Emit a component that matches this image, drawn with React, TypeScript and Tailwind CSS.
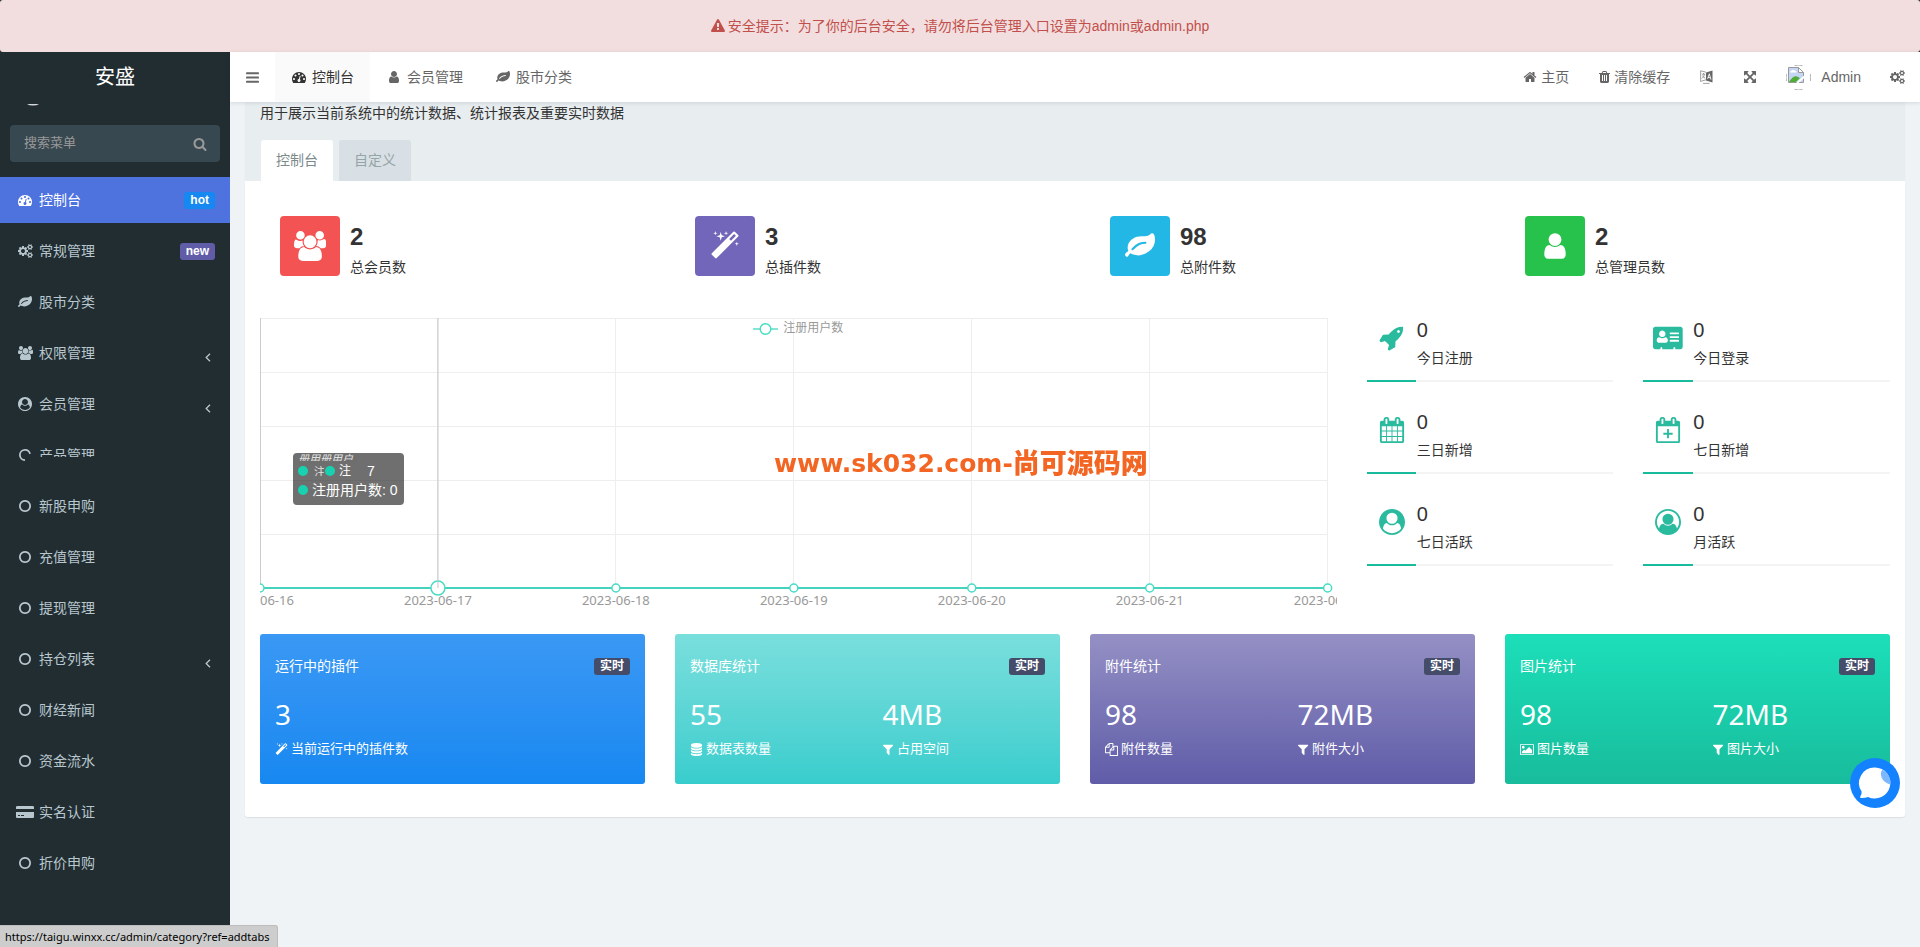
import React, { useState } from "react";
import clsx from "clsx";

// Font Awesome 4 outlines, most of them on a 1792 grid
const ICONS = {
  tachometer: {
    w: 1792,
    d: "M384 1152q0-53-37.5-90.5t-90.5-37.5-90.5 37.5-37.5 90.5 37.5 90.5 90.5 37.5 90.5-37.5 37.5-90.5zm192-448q0-53-37.5-90.5t-90.5-37.5-90.5 37.5-37.5 90.5 37.5 90.5 90.5 37.5 90.5-37.5 37.5-90.5zm428 481l101-382q6-26-7.5-48.5t-38.5-29.5-48 6.5-30 39.5l-101 382q-60 5-107 43.5t-63 98.5q-20 77 20 146t117 89 146-20 89-117q16-60-6-117t-72-91zm660-33q0-53-37.5-90.5t-90.5-37.5-90.5 37.5-37.5 90.5 37.5 90.5 90.5 37.5 90.5-37.5 37.5-90.5zm-640-640q0-53-37.5-90.5t-90.5-37.5-90.5 37.5-37.5 90.5 37.5 90.5 90.5 37.5 90.5-37.5 37.5-90.5zm448 192q0-53-37.5-90.5t-90.5-37.5-90.5 37.5-37.5 90.5 37.5 90.5 90.5 37.5 90.5-37.5 37.5-90.5zm320 448q0 261-141 483-19 29-54 29h-1402q-35 0-54-29-141-221-141-483 0-182 71-348t191-286 286-191 348-71 348 71 286 191 191 286 71 348z",
  },
  user: {
    w: 1792,
    d: "M1536 1399q0 109-62.5 187t-150.5 78h-854q-88 0-150.5-78t-62.5-187q0-85 8.5-160.5t31.5-152 58.5-131 94-89 134.5-34.5q131 128 313 128t313-128q76 0 134.5 34.5t94 89 58.5 131 31.5 152 8.5 160.5zm-256-887q0 159-112.5 271.5t-271.5 112.5-271.5-112.5-112.5-271.5 112.5-271.5 271.5-112.5 271.5 112.5 112.5 271.5z",
  },
  leaf: {
    w: 1792,
    d: "M1280 704q0-26-19-45t-45-19q-172 0-318 49.5t-259.5 134-235.5 219.5q-19 21-19 45 0 26 19 45t45 19q24 0 45-19 27-24 74-71t67-66q137-124 268.5-176t313.5-52q26 0 45-19t19-45zm512-198q0 95-20 193-46 224-184.5 383t-357.5 268q-214 108-438 108-148 0-286-47-15-5-88-42t-96-37q-16 0-39.5 32t-45 70-52.5 70-60 32q-43 0-63.5-17.5t-45.5-59.5q-2-4-6-11t-5.5-10-3-9.5-1.5-13.5q0-35 31-73.5t68-65.5 68-56 31-48q0-4-14-38t-16-44q-9-51-9-104 0-115 43.5-220t119-184.5 170.5-139 204-95.5q55-18 145-25.5t179.5-9 178.5-6 163.5-24 113.5-56.5l29.5-29.5 29.5-28 27-20 36.5-16 43.5-4.5q39 0 70.5 46t47.5 112 24 124 8 96z",
  },
  home: {
    w: 1792,
    d: "M1472 992v480q0 26-19 45t-45 19h-384v-384h-256v384h-384q-26 0-45-19t-19-45v-480q0-1 .5-3t.5-3l575-474 575 474q1 2 1 6zm223-69l-62 74q-8 9-21 11h-3q-13 0-21-7l-692-577-692 577q-12 8-24 7-13-2-21-11l-62-74q-8-10-7-23.5t11-21.5l719-599q32-26 76-26t76 26l244 204v-195q0-14 9-23t23-9h192q14 0 23 9t9 23v408l219 182q10 8 11 21.5t-7 23.5z",
  },
  users: {
    w: 1920,
    d: "M593 896q-162 5-265 128h-134q-82 0-138-40.5t-56-118.5q0-353 124-353 6 0 43.5 21t97.5 42.5 119 21.5q67 0 133-23-5 37-5 66 0 159 93 293zm1071 637q0 120-73 189.5t-194 69.5h-874q-121 0-194-69.5t-73-189.5q0-53 3.5-103.5t14-109 26.5-108.5 43-97.5 62-81 85.5-53.5 111.5-20q10 0 43 21.5t73 48 107 48 135 21.5 135-21.5 107-48 73-48 43-21.5q61 0 111.5 20t85.5 53.5 62 81 43 97.5 26.5 108.5 14 109 3.5 103.5zm-1024-1277q0 106-75 181t-181 75-181-75-75-181 75-181 181-75 181 75 75 181zm704 384q0 159-112.5 271.5t-271.5 112.5-271.5-112.5-112.5-271.5 112.5-271.5 271.5-112.5 271.5 112.5 112.5 271.5zm576 225q0 78-56 118.5t-138 40.5h-134q-103-123-265-128 93-134 93-293 0-29-5-66 66 23 133 23 59 0 119-21.5t97.5-42.5 43.5-21q124 0 124 353zm-128-609q0 106-75 181t-181 75-181-75-75-181 75-181 181-75 181 75 75 181z",
  },
  magic: {
    w: 1792,
    d: "M1254 581l293-293-107-107-293 293zm447-293q0 27-18 45l-1286 1286q-18 18-45 18t-45-18l-198-198q-18-18-18-45t18-45l1286-1286q18-18 45-18t45 18l198 198q18 18 18 45zm-1351-190l98 30-98 30-30 98-30-98-98-30 98-30 30-98zm350 162l196 60-196 60-60 196-60-196-196-60 196-60 60-196zm930 478l98 30-98 30-30 98-30-98-98-30 98-30 30-98zm-640-640l98 30-98 30-30 98-30-98-98-30 98-30 30-98z",
  },
  trash: {
    x: 192,
    w: 1408,
    d: "M704 1376v-704q0-14-9-23t-23-9h-64q-14 0-23 9t-9 23v704q0 14 9 23t23 9h64q14 0 23-9t9-23zm256 0v-704q0-14-9-23t-23-9h-64q-14 0-23 9t-9 23v704q0 14 9 23t23 9h64q14 0 23-9t9-23zm256 0v-704q0-14-9-23t-23-9h-64q-14 0-23 9t-9 23v704q0 14 9 23t23 9h64q14 0 23-9t9-23zm-544-992h448l-48-117q-7-9-17-11h-317q-10 2-17 11zm928 32v64q0 14-9 23t-23 9h-96v948q0 83-47 143.5t-113 60.5h-832q-66 0-113-58.5t-47-141.5v-952h-96q-14 0-23-9t-9-23v-64q0-14 9-23t23-9h309l70-167q15-37 54-63t79-26h320q40 0 79 26t54 63l70 167h309q14 0 23 9t9 23z",
  },
  expand: {
    w: 1792,
    d: "M1411 541l-355 355 355 355 144-144q29-31 70-14 39 17 39 59v448q0 26-19 45t-45 19h-448q-42 0-59-40-17-39 14-69l144-144-355-355-355 355 144 144q31 30 14 69-17 40-59 40h-448q-26 0-45-19t-19-45v-448q0-42 40-59 39-17 69 14l144 144 355-355-355-355-144 144q-19 19-45 19-12 0-24-5-40-17-40-59v-448q0-26 19-45t45-19h448q42 0 59 40 17 39-14 69l-144 144 355 355 355-355-144-144q-31-30-14-69 17-40 59-40h448q26 0 45 19t19 45v448q0 42-39 59-13 5-25 5-26 0-45-19z",
  },
  bars: {
    w: 1792,
    d: "M192 1280h1408q64 0 64 64v128q0 64-64 64h-1408q-64 0-64-64v-128q0-64 64-64zM192 768h1408q64 0 64 64v128q0 64-64 64h-1408q-64 0-64-64v-128q0-64 64-64zM192 256h1408q64 0 64 64v128q0 64-64 64h-1408q-64 0-64-64v-128q0-64 64-64z",
  },
  search: {
    w: 1792,
    d: "M1216 832q0-185-131.5-316.5t-316.5-131.5-316.5 131.5-131.5 316.5 131.5 316.5 316.5 131.5 316.5-131.5 131.5-316.5zm512 832q0 52-38 90t-90 38q-54 0-90-38l-343-342q-179 124-399 124-143 0-273.5-55.5t-225-150-150-225-55.5-273.5 55.5-273.5 150-225 225-150 273.5-55.5 273.5 55.5 225 150 150 225 55.5 273.5q0 220-124 399l343 343q37 37 37 90z",
  },
  circle: {
    w: 1792,
    d: "M896 352q-148 0-273 73t-198 198-73 273 73 273 198 198 273 73 273-73 198-198 73-273-73-273-198-198-273-73zm768 544q0 209-103 385.5t-279.5 279.5-385.5 103-385.5-103-279.5-279.5-103-385.5 103-385.5 279.5-279.5 385.5-103 385.5 103 279.5 279.5 103 385.5z",
  },
  brokenCircle: {
    w: 1792,
    d: "M896 128a768 768 0 0 1 750 600l-222 30a544 544 0 1 0-528 682v224a768 768 0 1 1 0-1536z",
  },
  userCircle: {
    w: 1792,
    d: "M1523 1339q-22-155-87.5-257.5t-184.5-118.5q-67 74-159.5 115.5t-195.5 41.5-195.5-41.5-159.5-115.5q-119 16-184.5 118.5t-87.5 257.5q106 150 271 237.5t356 87.5 356-87.5 271-237.5zm-243-699q0-159-112.5-271.5t-271.5-112.5-271.5 112.5-112.5 271.5 112.5 271.5 271.5 112.5 271.5-112.5 112.5-271.5zm512 256q0 182-71 347.5t-190.5 286-285.5 191.5-349 71q-182 0-348-71t-286-191-191-286-71-348 71-348 191-286 286-191 348-71 348 71 286 191 191 286 71 348z",
  },
  userCircleO: {
    w: 1792,
    d: "M896 0q182 0 348 71t286 191 191 286 71 348q0 181-70.5 347t-190.5 286-286 191.5-349 71.5-349-71-285.5-191.5-190.5-286-71-347.5 71-348 191-286 286-191 348-71zm619 1351q149-205 149-455 0-156-61-298t-164-245-245-164-298-61-298 61-245 164-164 245-61 298q0 250 149 455 66-327 306-327 131 128 313 128t313-128q240 0 306 327zm-235-647q0-159-112.5-271.5t-271.5-112.5-271.5 112.5-112.5 271.5 112.5 271.5 271.5 112.5 271.5-112.5 112.5-271.5z",
  },
  cogs: {
    w: 1920,
    d: "M896 896q0-106-75-181t-181-75-181 75-75 181 75 181 181 75 181-75 75-181zm768 512q0-52-38-90t-90-38-90 38-38 90q0 53 37.5 90.5t90.5 37.5 90.5-37.5 37.5-90.5zm0-1024q0-52-38-90t-90-38-90 38-38 90q0 53 37.5 90.5t90.5 37.5 90.5-37.5 37.5-90.5zm-384 421v185q0 10-7 19.5t-16 10.5l-155 24q-11 35-32 76 34 48 90 115 7 11 7 20 0 12-7 19-23 30-82.5 89.5t-78.5 59.5q-11 0-21-7l-115-90q-37 19-77 31-11 108-23 155-7 24-30 24h-186q-11 0-20-7.5t-10-17.5l-23-153q-34-10-75-31l-118 89q-7 7-20 7-11 0-21-8-144-133-144-160 0-9 7-19 10-14 41-53t47-61q-23-44-35-82l-152-24q-10-1-17-9.5t-7-19.5v-185q0-10 7-19.5t16-10.5l155-24q11-35 32-76-34-48-90-115-7-11-7-20 0-12 7-20 22-30 82-89t79-59q11 0 21 7l115 90q34-18 77-32 11-108 23-154 7-24 30-24h186q11 0 20 7.5t10 17.5l23 153q34 10 75 31l118-89q8-7 20-7 11 0 21 8 144 133 144 160 0 8-7 19-12 16-42 54t-45 60q23 48 34 82l152 23q10 2 17 10.5t7 19.5zm640 533v140q0 16-149 31-12 27-30 52 51 113 51 138 0 4-4 7-122 71-124 71-8 0-46-47t-52-68q-20 2-30 2t-30-2q-14 21-52 68t-46 47q-2 0-124-71-4-3-4-7 0-25 51-138-18-25-30-52-149-15-149-31v-140q0-16 149-31 13-29 30-52-51-113-51-138 0-4 4-7 4-2 35-20t59-34 30-16q8 0 46 46.5t52 67.5q20-2 30-2t30 2q51-71 92-112l6-2q4 0 124 70 4 3 4 7 0 25-51 138 17 23 30 52 149 15 149 31zm0-1024v140q0 16-149 31-12 27-30 52 51 113 51 138 0 4-4 7-122 71-124 71-8 0-46-47t-52-68q-20 2-30 2t-30-2q-14 21-52 68t-46 47q-2 0-124-71-4-3-4-7 0-25 51-138-18-25-30-52-149-15-149-31v-140q0-16 149-31 13-29 30-52-51-113-51-138 0-4 4-7 4-2 35-20t59-34 30-16q8 0 46 46.5t52 67.5q20-2 30-2t30 2q51-71 92-112l6-2q4 0 124 70 4 3 4 7 0 25-51 138 17 23 30 52 149 15 149 31z",
  },
  rocket: {
    w: 1792,
    d: "M1440 448q0-40-28-68t-68-28-68 28-28 68 28 68 68 28 68-28 28-68zm224-288q0 249-75.5 430.5t-253.5 360.5q-81 80-195 176l-20 379q-2 16-16 26l-384 224q-7 4-16 4-12 0-23-9l-64-64q-13-14-8-32l85-276-281-281-276 85q-3 1-9 1-14 0-23-9l-64-64q-17-19-5-39l224-384q10-14 26-16l379-20q96-114 176-195 188-187 358-258t431-71q14 0 24 9.5t10 22.5z",
  },
  warning: {
    w: 1792,
    d: "M1024 1375v-190q0-14-9.5-23.5t-22.5-9.5h-192q-13 0-22.5 9.5t-9.5 23.5v190q0 14 9.5 23.5t22.5 9.5h192q13 0 22.5-9.5t9.5-23.5zm-2-374l18-459q0-12-10-19-13-11-24-11h-220q-11 0-24 11-10 7-10 21l17 457q0 10 10 16.5t24 6.5h185q14 0 23.5-6.5t10.5-16.5zm-14-934l768 1408q35 63-2 126-17 29-46.5 46t-63.5 17h-1536q-34 0-63.5-17t-46.5-46q-37-63-2-126l768-1408q17-31 47-49t65-18 65 18 47 49z",
  },
  calendar: {
    w: 1792,
    d: "M192 1664h288v-288h-288v288zm352 0h320v-288h-320v288zm-352-352h288v-320h-288v320zm352 0h320v-320h-320v320zm-352-384h288v-288h-288v288zm736 736h320v-288h-320v288zm-384-736h320v-288h-320v288zm768 736h288v-288h-288v288zm-384-352h320v-320h-320v320zm-352-864v-288q0-13-9.5-22.5t-22.5-9.5h-64q-13 0-22.5 9.5t-9.5 22.5v288q0 13 9.5 22.5t22.5 9.5h64q13 0 22.5-9.5t9.5-22.5zm736 864h288v-320h-288v320zm-384-384h320v-288h-320v288zm384 0h288v-288h-288v288zm32-480v-288q0-13-9.5-22.5t-22.5-9.5h-64q-13 0-22.5 9.5t-9.5 22.5v288q0 13 9.5 22.5t22.5 9.5h64q13 0 22.5-9.5t9.5-22.5zm384-64v1280q0 52-38 90t-90 38h-1408q-52 0-90-38t-38-90v-1280q0-52 38-90t90-38h128v-96q0-66 47-113t113-47h64q66 0 113 47t47 113v96h384v-96q0-66 47-113t113-47h64q66 0 113 47t47 113v96h128q52 0 90 38t38 90z",
  },
  calendarPlus: {
    w: 1792,
    d: "M1728 384v1280q0 52-38 90t-90 38h-1408q-52 0-90-38t-38-90v-1280q0-52 38-90t90-38h128v-96q0-66 47-113t113-47h64q66 0 113 47t47 113v96h384v-96q0-66 47-113t113-47h64q66 0 113 47t47 113v96h128q52 0 90 38t38 90zM192 640v1024h1408v-1024zM832 832h128v256h256v128h-256v256h-128v-256h-256v-128h256zM480 128h64q32 0 32 32v288q0 32-32 32h-64q-32 0-32-32v-288q0-32 32-32zM1248 128h64q32 0 32 32v288q0 32-32 32h-64q-32 0-32-32v-288q0-32 32-32z",
    evenOdd: true,
  },
  card: {
    w: 2048,
    d: "M160 128h1728q66 0 113 47t47 113v1216q0 66-47 113t-113 47h-352v-96q0-32-32-32h-64q-32 0-32 32v96h-768v-96q0-32-32-32h-64q-32 0-32 32v96h-352q-66 0-113-47t-47-113v-1216q0-66 47-113t113-47zM430 840q-174 0-174 250 0 126 118 126h532q118 0 118-126 0-250-174-250-100 72-210 72t-210-72zM640 384a224 224 0 1 0 1 0zM1184 512h576q32 0 32 32v64q0 32-32 32h-576q-32 0-32-32v-64q0-32 32-32zM1184 768h576q32 0 32 32v64q0 32-32 32h-576q-32 0-32-32v-64q0-32 32-32zM1184 1024h576q32 0 32 32v64q0 32-32 32h-576q-32 0-32-32v-64q0-32 32-32z",
    evenOdd: true,
  },
  creditCard: {
    w: 2304,
    d: "M160 128h1984q66 0 113 47t47 113v224h-2304v-224q0-66 47-113t113-47zM0 896h2304v608q0 66-47 113t-113 47h-1984q-66 0-113-47t-47-113zM256 1280v128h256v-128zM640 1280v128h384v-128z",
    evenOdd: true,
  },
  database: {
    w: 1792,
    d: "M896 768q237 0 443-43t325-127v170q0 69-103 128t-280 93.5-385 34.5-385-34.5-280-93.5-103-128v-170q119 84 325 127t443 43zm0 768q237 0 443-43t325-127v170q0 69-103 128t-280 93.5-385 34.5-385-34.5-280-93.5-103-128v-170q119 84 325 127t443 43zm0-384q237 0 443-43t325-127v170q0 69-103 128t-280 93.5-385 34.5-385-34.5-280-93.5-103-128v-170q119 84 325 127t443 43zm0-1152q208 0 385 34.5t280 93.5 103 128v128q0 69-103 128t-280 93.5-385 34.5-385-34.5-280-93.5-103-128v-128q0-69 103-128t280-93.5 385-34.5z",
  },
  filter: {
    x: 192,
    w: 1600,
    d: "M1595 295q17 41-14 70l-493 493v742q0 42-39 59-13 5-25 5-27 0-45-19l-256-256q-19-19-19-45v-486l-493-493q-31-29-14-70 17-39 59-39h1280q42 0 59 39z",
  },
  image: {
    w: 1920,
    d: "M640 576q0 80-56 136t-136 56-136-56-56-136 56-136 136-56 136 56 56 136zm1024 384v448h-1408v-192l320-320 160 160 512-512zm96-704h-1600q-13 0-22.5 9.5t-9.5 22.5v1216q0 13 9.5 22.5t22.5 9.5h1600q13 0 22.5-9.5t9.5-22.5v-1216q0-13-9.5-22.5t-22.5-9.5zm160 32v1216q0 66-47 113t-113 47h-1600q-66 0-113-47t-47-113v-1216q0-66 47-113t113-47h1600q66 0 113 47t47 113z",
  },
  files: {
    w: 1792,
    d: "M1696 384q40 0 68 28t28 68v1216q0 40-28 68t-68 28h-960q-40 0-68-28t-28-68v-288h-544q-40 0-68-28t-28-68v-672q0-40 20-88t48-76l408-408q28-28 76-48t88-20h416q40 0 68 28t28 68v328q68-40 128-40h416zm-544 213l-299 299h299v-299zm-640-384l-299 299h299v-299zm196 647l316-316v-416h-384v416q0 40-28 68t-68 28h-416v640h512v-256q0-40 20-88t48-76zm956 804v-1152h-384v416q0 40-28 68t-68 28h-416v640h896z",
  },
};

type IconName = keyof typeof ICONS;

// height comes from the class, width follows the glyph
const Icon: React.FC<{ name: IconName; className?: string }> = ({ name, className = "h-3.5" }) => {
  const icon: { x?: number; w: number; d: string; evenOdd?: boolean } = ICONS[name];
  return (
    <svg
      viewBox={`${icon.x ?? 0} 0 ${icon.w} 1792`}
      className={clsx("w-auto shrink-0 fill-current", className)}
      fillRule={icon.evenOdd ? "evenodd" : "nonzero"}
      aria-hidden="true"
    >
      <path d={icon.d} />
    </svg>
  );
};

interface MenuItem {
  label: string;
  icon: IconName;
  badge?: string;
  badgeClass?: string;
  arrow?: boolean;
  fading?: boolean;
}

const MENU: MenuItem[] = [
  { label: "控制台", icon: "tachometer", badge: "hot", badgeClass: "bg-[#1688f1]" },
  { label: "常规管理", icon: "cogs", badge: "new", badgeClass: "bg-[#605ca8]" },
  { label: "股市分类", icon: "leaf" },
  { label: "权限管理", icon: "users", arrow: true },
  { label: "会员管理", icon: "userCircle", arrow: true },
  { label: "产品管理", icon: "brokenCircle", fading: true },
  { label: "新股申购", icon: "circle" },
  { label: "充值管理", icon: "circle" },
  { label: "提现管理", icon: "circle" },
  { label: "持仓列表", icon: "circle", arrow: true },
  { label: "财经新闻", icon: "circle" },
  { label: "资金流水", icon: "circle" },
  { label: "实名认证", icon: "creditCard" },
  { label: "折价申购", icon: "circle" },
];

const NAV_TABS: { label: string; icon: IconName }[] = [
  { label: "控制台", icon: "tachometer" },
  { label: "会员管理", icon: "user" },
  { label: "股市分类", icon: "leaf" },
];

const TOTALS: { value: number; label: string; icon: IconName; color: string }[] = [
  { value: 2, label: "总会员数", icon: "users", color: "bg-[#f35352]" },
  { value: 3, label: "总插件数", icon: "magic", color: "bg-[#7266ba]" },
  { value: 98, label: "总附件数", icon: "leaf", color: "bg-[#23b7e5]" },
  { value: 2, label: "总管理员数", icon: "user", color: "bg-[#27c24c]" },
];

const ACTIVITY: { label: string; icon: IconName }[] = [
  { label: "今日注册", icon: "rocket" },
  { label: "今日登录", icon: "card" },
  { label: "三日新增", icon: "calendar" },
  { label: "七日新增", icon: "calendarPlus" },
  { label: "七日活跃", icon: "userCircle" },
  { label: "月活跃", icon: "userCircleO" },
];

const CARDS: {
  title: string;
  color: string;
  items: { value: string; label: string; icon: IconName }[];
}[] = [
  {
    title: "运行中的插件",
    color: "from-[#3a98f4] to-[#1688f1]",
    items: [{ value: "3", label: "当前运行中的插件数", icon: "magic" }],
  },
  {
    title: "数据库统计",
    color: "from-[#79dfdd] to-[#37cdcd]",
    items: [
      { value: "55", label: "数据表数量", icon: "database" },
      { value: "4MB", label: "占用空间", icon: "filter" },
    ],
  },
  {
    title: "附件统计",
    color: "from-[#9590c4] to-[#605ca8]",
    items: [
      { value: "98", label: "附件数量", icon: "files" },
      { value: "72MB", label: "附件大小", icon: "filter" },
    ],
  },
  {
    title: "图片统计",
    color: "from-[#1cdfb9] to-[#18bc9c]",
    items: [
      { value: "98", label: "图片数量", icon: "image" },
      { value: "72MB", label: "图片大小", icon: "filter" },
    ],
  },
];

const DATES = ["2023-06-16", "2023-06-17", "2023-06-18", "2023-06-19", "2023-06-20", "2023-06-21", "2023-06-22"];
const HOVERED = 1;

const Sidebar: React.FC = () => (
  <aside className="w-[230px] shrink-0 bg-[#222d32] text-[#b8c7ce]">
    <a href="#" className="flex h-[50px] items-center justify-center text-xl text-white">
      安盛
    </a>
    <div className="h-[23px] pt-0.5 pl-[27px]">
      <svg viewBox="0 0 12 2" className="h-0.5 w-3" aria-hidden="true">
        <path d="M0 0h12q-2 1.600-6 1.600T0 0z" fill="#d5d8d9" />
      </svg>
    </div>
    <form className="mx-2.5 flex h-[37px] items-center rounded bg-[#374850] text-[#999]">
      <input
        type="text"
        aria-label="搜索菜单"
        placeholder="搜索菜单"
        className="min-w-0 flex-1 bg-transparent pl-3.5 text-[13px] placeholder:text-[#999] focus:outline-none"
      />
      <button type="button" aria-label="搜索" className="px-[13px]">
        <Icon name="search" />
      </button>
    </form>
    <ul className="mt-[15px] space-y-[5px] pb-10">
      {MENU.map((item, i) => (
        <li key={item.label}>
          <a
            href="#"
            className={clsx("flex h-[46px] items-center gap-1 px-[15px]", i === 0 && "bg-[#4e73df] text-white")}
          >
            <span className="flex w-5 justify-center">
              <Icon name={item.icon} />
            </span>
            {item.fading ? (
              <span className="h-5 leading-5">
                <span className="block h-3 overflow-hidden">{item.label}</span>
              </span>
            ) : (
              <span className="leading-5">{item.label}</span>
            )}
            {item.badge && (
              <span
                className={clsx(
                  "ml-auto rounded-[3px] px-1.5 text-xs leading-[17px] font-bold text-white",
                  item.badgeClass
                )}
              >
                {item.badge}
              </span>
            )}
            {item.arrow && (
              <svg viewBox="0 0 6 9" className="mt-2 mr-1 ml-auto h-[9px] w-1.5" aria-hidden="true">
                <path d="M5 .7 1.2 4.5 5 8.3" fill="none" stroke="currentColor" strokeWidth="1.3" />
              </svg>
            )}
          </a>
        </li>
      ))}
    </ul>
  </aside>
);

const Navbar: React.FC = () => (
  <nav className="relative z-10 flex h-[50px] bg-white text-[#666] shadow-[0_1px_4px_rgba(0,21,41,0.12)]">
    <button type="button" aria-label="切换菜单" className="flex w-[45px] items-center justify-center">
      <Icon name="bars" className="h-[15px]" />
    </button>
    {NAV_TABS.map((tab, i) => (
      <a
        key={tab.label}
        href="#"
        className={clsx("flex items-center gap-[5px] px-4", i === 0 && "bg-[#fafafa] text-[#333]")}
      >
        <span className="flex w-4 justify-center">
          <Icon name={tab.icon} />
        </span>
        {tab.label}
      </a>
    ))}
    <div className="ml-auto flex">
      <a href="#" className="flex items-center gap-1 px-[15px]">
        <Icon name="home" />
        主页
      </a>
      <a href="#" className="flex items-center gap-1 px-[15px]">
        <Icon name="trash" />
        清除缓存
      </a>
      <a href="#" aria-label="语言" className="flex items-center px-[15px]">
        <svg viewBox="0 0 13 14" className="h-3.5 w-[13px]" aria-hidden="true">
          <path d="M6 2.2.6.8v10.600L6 9.800M3 13.400h6.500" fill="none" stroke="#8a8a8a" strokeWidth=".8" />
          <path
            d="M1.800 4.200h3.400M3.500 3v1.200M1.800 8.600q2.200-1.600 2.700-4.400M2.400 5.600q1 2 2.900 2.600"
            fill="none"
            stroke="#888"
            strokeWidth=".8"
          />
          <path d="M6 2.600 12.500.6v12L6 10.400z" fill="currentColor" />
          <path d="m7.600 8.800 1.700-5 1.700 5.800M8.100 7.400l2.300.4" fill="none" stroke="#fff" strokeWidth=".9" />
        </svg>
      </a>
      <a href="#" aria-label="全屏" className="flex items-center px-[15px]">
        <Icon name="expand" />
      </a>
      <a href="#" className="flex items-center gap-2.5 px-3.5">
        <svg viewBox="0 0 25 25" className="h-[25px] w-[25px]" aria-hidden="true">
          <path
            d="M8.500.6q4-1 8 0M8.500 24.400q4 1 8 0M.5 9q-.8 3.500 0 7M24.500 9q-.2 3.500 0 7"
            fill="none"
            stroke="#b5b5b5"
          />
          <path d="M2.500 2.500h10l5 5v10h-15z" fill="#c5d6f5" stroke="#9a9a9a" />
          <path d="M12.500 2.500v5h5z" fill="#fff" stroke="#9a9a9a" />
          <path d="M4 7.500q0-2 2-2 1-1.500 2.500 0 2 0 2 2z" fill="#fff" />
          <path d="M3 17q4-6.500 8-5.500l3 1.500-4 4z" fill="#4fac34" />
          <path d="m11 18 7.500-6.500" stroke="#fff" strokeWidth="2" />
        </svg>
        Admin
      </a>
      <a href="#" aria-label="设置" className="flex items-center px-[15px]">
        <Icon name="cogs" />
      </a>
    </div>
  </nav>
);

const Chart: React.FC = () => {
  const x = (i: number) => `${(i * 100) / (DATES.length - 1)}%`;

  return (
    <div className="relative h-[300px] overflow-hidden pr-[9px]">
      <svg className="block h-full w-full overflow-visible" role="img" aria-label="注册用户数">
        <g stroke="#eee" shapeRendering="crispEdges">
          {[0, 54, 108, 162, 216].map((y) => (
            <line key={y} x1="0" x2="100%" y1={y + 0.5} y2={y + 0.5} />
          ))}
          {DATES.map((date, i) => (
            <line key={date} x1={x(i)} x2={x(i)} y1="0" y2="270" stroke={i === 0 ? "#ccc" : "#eee"} />
          ))}
        </g>
        <line x1="0" x2="100%" y1="270" y2="270" stroke="#46d3bd" strokeWidth="2" />
        <g fill="#fff" stroke="#46dcc4">
          {DATES.map((date, i) => (
            <circle key={date} cx={x(i)} cy="270" r={i === HOVERED ? 7 : 4} strokeWidth="1.5" />
          ))}
        </g>
        <line x1={x(HOVERED)} x2={x(HOVERED)} y1="0" y2="270" stroke="#c4c4c4" />
        <g className="fill-[#999] font-['Noto_Sans'] text-[13px]" textAnchor="middle">
          {DATES.map((date, i) => (
            <text key={date} x={x(i)} y="287">
              {date}
            </text>
          ))}
        </g>
      </svg>

      <div className="absolute inset-x-0 top-0 flex h-5 items-center justify-center gap-[5px] text-xs text-[#999]">
        <svg viewBox="0 0 25 14" className="h-3.5 w-[25px]" aria-hidden="true">
          <path d="M0 8h25" stroke="#5fdcc8" strokeWidth="1.5" />
          <circle cx="12.5" cy="8" r="5.3" fill="#fff" stroke="#46dcc4" strokeWidth="1.4" />
        </svg>
        注册用户数
      </div>

      <div className="absolute top-[135px] left-[33px] h-[52px] w-[111px] overflow-hidden rounded bg-[rgba(50,50,50,0.7)] px-[5px] text-sm text-white">
        <div className="h-2 overflow-hidden text-[11px] leading-3 italic opacity-80">册用册用户,</div>
        <div className="flex h-5 items-center">
          <span className="h-2.5 w-2.5 rounded-full bg-[#18d1b1]" />
          <span className="ml-1.5 h-2.5 w-2.5 overflow-hidden text-[11px] leading-3 opacity-80">注</span>
          <span className="ml-px h-2.5 w-2.5 rounded-full bg-[#18d1b1]" />
          <span className="ml-1 text-xs leading-5">注</span>
          <span className="ml-4 leading-5">7</span>
        </div>
        <div className="flex h-[18px] items-center gap-1 whitespace-nowrap">
          <span className="h-2.5 w-2.5 rounded-full bg-[#18d1b1]" />
          注册用户数: 0
        </div>
      </div>
    </div>
  );
};

const Activity: React.FC = () => (
  <div className="grid grid-cols-2 content-start gap-x-[30px] gap-y-7">
    {ACTIVITY.map((item) => (
      <div key={item.label}>
        <div className="flex">
          <div className="flex h-10 w-[50px] items-center justify-center text-[#2abb9f]">
            <Icon name={item.icon} className="h-[26px]" />
          </div>
          <div>
            <div className="text-xl leading-6">0</div>
            <div className="mt-1.5 leading-5">{item.label}</div>
          </div>
        </div>
        <div className="mt-3 h-0.5 bg-[#f4f4f4]">
          <div className="h-full w-1/5 bg-[#18bc9c]" />
        </div>
      </div>
    ))}
  </div>
);

export default function App() {
  const [tab, setTab] = useState("控制台");

  return (
    <div className="flex min-h-screen flex-col bg-[#222d32] font-['Liberation_Sans','Noto_Sans_CJK_SC',sans-serif] text-sm text-[#333]">
      <div className="flex h-[52px] items-center justify-center gap-[3px] rounded-[3px] bg-[#f2dede] pb-px text-[#c14f4c]">
        <Icon name="warning" />
        安全提示：为了你的后台安全，请勿将后台管理入口设置为admin或admin.php
      </div>

      <div className="flex flex-1">
        <Sidebar />
        <div className="flex min-w-0 flex-1 flex-col bg-[#eff3f6]">
          <Navbar />
          <main className="mx-[15px] rounded-b-[3px] bg-white shadow-[0_1px_1px_rgba(0,0,0,0.08)]">
            <div className="bg-[#e8edf0] px-[15px] pt-px">
              <p className="leading-5">用于展示当前系统中的统计数据、统计报表及重要实时数据</p>
              <div className="mt-[17px] ml-px flex gap-1.5">
                {["控制台", "自定义"].map((name) => (
                  <button
                    key={name}
                    type="button"
                    onClick={() => setTab(name)}
                    className={clsx(
                      "h-[41px] rounded-t-[3px] px-[15px] pb-0.5",
                      tab === name ? "bg-white text-[#7b8a8b]" : "bg-[#d8dfe5] text-[#95a5a6]"
                    )}
                  >
                    {name}
                  </button>
                ))}
              </div>
            </div>

            <div className="pt-[35px] pb-[33px]">
              <div className="grid grid-cols-4">
                {TOTALS.map((item) => (
                  <div key={item.label} className="flex gap-2.5 pl-[35px]">
                    <div
                      className={clsx("flex h-[60px] w-[60px] items-center justify-center rounded text-white", item.color)}
                    >
                      <Icon name={item.icon} className="h-[30px]" />
                    </div>
                    <div className="pt-1.5 leading-[30px]">
                      <div className="text-2xl leading-[30px] font-bold">{item.value}</div>
                      <div>{item.label}</div>
                    </div>
                  </div>
                ))}
              </div>

              <div className="mt-9 grid grid-cols-3">
                <div className="col-span-2 px-[15px]">
                  <Chart />
                </div>
                <div className="px-[15px]">
                  <Activity />
                </div>
              </div>

              <div className="mt-4 grid grid-cols-4 gap-[30px] px-[15px]">
                {CARDS.map((card) => (
                  <section
                    key={card.title}
                    className={clsx("rounded-[3px] bg-linear-to-b px-[15px] pt-[22px] pb-[25px] text-white", card.color)}
                  >
                    <div className="flex h-5 items-center justify-between">
                      <h5>{card.title}</h5>
                      <span className="rounded-[3px] bg-[#444c69] px-1.5 text-xs leading-[17px] font-bold">实时</span>
                    </div>
                    <div className="mt-[18px] grid grid-cols-2 gap-[30px]">
                      {card.items.map((item) => (
                        <div key={item.label}>
                          <div className="font-['Noto_Sans'] text-[28px] leading-10">{item.value}</div>
                          <div className="mt-[5px] flex items-center gap-[3px] text-[13px] leading-5 whitespace-nowrap">
                            <Icon name={item.icon} className="h-[13px]" />
                            {item.label}
                          </div>
                        </div>
                      ))}
                    </div>
                  </section>
                ))}
              </div>
            </div>
          </main>
        </div>
      </div>

      <div className="pointer-events-none fixed top-[448px] left-[774px] flex items-center font-bold whitespace-nowrap text-[#f26522]">
        <span className="font-['DejaVu_Sans'] text-[25px] leading-8">www.sk032.com-</span>
        <span className="text-[27px] leading-8 font-black">尚可源码网</span>
      </div>

      <button type="button" aria-label="在线客服" className="fixed right-5 bottom-[139px] h-[50px] w-[50px]">
        <svg viewBox="0 0 50 50" className="h-full w-full" aria-hidden="true">
          <circle cx="25" cy="25" r="25" fill="#1482ff" />
          <path
            d="M25 9.500a15.500 15.500 0 1 1-7 29.400q-3 1.300-7 1.100-1.600-.2-.6-1.700 1.500-2 1.200-4.800A15.500 15.500 0 0 1 25 9.500z"
            fill="#fff"
          />
          <path d="M32.500 11.400a15.500 15.500 0 0 1 8 15.300q-9-3-9.600-10.200-.1-3.200 1.600-5.100z" fill="#7db8ff" />
        </svg>
      </button>

      <div className="fixed bottom-0 left-0 h-[22px] rounded-tr-[3px] border-t border-r border-[#bdbdbd] bg-[#cdcdcd] px-[7px] pl-[5px] font-['Noto_Sans'] text-[11px] leading-[22px] text-black">
        https://taigu.winxx.cc/admin/category?ref=addtabs
      </div>
    </div>
  );
}
